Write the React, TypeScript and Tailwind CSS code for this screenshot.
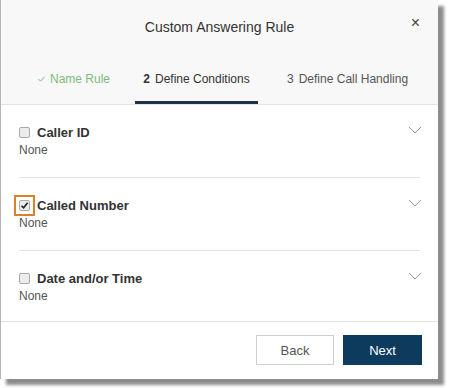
import React from 'react';

type Condition = {
    label: string;
    value: string;
    checked: boolean;
};

const conditions: Condition[] = [
    { label: 'Caller ID', value: 'None', checked: false },
    { label: 'Called Number', value: 'None', checked: true },
    { label: 'Date and/or Time', value: 'None', checked: false },
];

function Chevron() {
    return (
        <svg width="14" height="8" viewBox="0 0 14 8" className="shrink-0">
            <path d="M1 1 L7 7 L13 1" fill="none" stroke="#9a9a9a" strokeWidth="1" />
        </svg>
    );
}

function Box({ checked }: { checked: boolean }) {
    const box = (
        <span className="w-[11px] h-[11px] rounded-[2px] border border-[#a9a9a9] bg-[#ececec] flex items-center justify-center">
            {checked && (
                <svg width="9" height="9" viewBox="0 0 9 9">
                    <path d="M1.5 4.8 L3.6 6.8 L7.6 1.8" fill="none" stroke="#222" strokeWidth="1.6" />
                </svg>
            )}
        </span>
    );
    // the checked one is highlighted with an orange frame
    if (checked) {
        return (
            <span className="w-[21px] h-[21px] -ml-[5px] -mr-[5px] border-2 border-[#d9822b] flex items-center justify-center">
                {box}
            </span>
        );
    }
    return box;
}

export default function App() {
    return (
        <div className="w-[449px] h-[388px] bg-white" style={{ fontFamily: '"Liberation Sans", Arial, sans-serif' }}>
            <div className="w-[438px] h-[379px] bg-white border-l border-[#b5b5b5] shadow-[6px_6px_3px_rgba(0,0,0,0.45)] flex flex-col">
                {/* header */}
                <div className="relative h-[106px] bg-[#f8f8f8] border-b border-[#e3e3e3] flex flex-col">
                    <div className="pt-[18px] text-center text-[14px] leading-[18px] text-[#333]">Custom Answering Rule</div>
                    <button className="absolute right-[18px] top-[15px] text-[16px] leading-[16px] text-[#444]">×</button>
                    <div className="mt-auto flex items-start pl-[37px] text-[12px] leading-[16px]">
                        <div className="w-[97px] flex items-center text-[#7cbb7c]">
                            <svg width="7" height="6" viewBox="0 0 7 6" className="mr-[5px]">
                                <path d="M0.6 3.2 L2.6 5.2 L6.4 0.8" fill="none" stroke="#7cbb7c" strokeWidth="1" />
                            </svg>
                            Name Rule
                        </div>
                        <div className="w-[123px] text-center pb-[14px] border-b-[3px] border-[#1d3345] text-[#333]">
                            <span className="font-bold mr-[5px]">2</span>Define Conditions
                        </div>
                        <div className="pl-[29px] text-[#555]">
                            <span className="mr-[5px]">3</span>Define Call Handling
                        </div>
                    </div>
                </div>

                {/* conditions */}
                <div className="flex-1 flex flex-col">
                    {conditions.map((c, i) => (
                        <div
                            key={c.label}
                            className={`mx-[18px] pt-[19px] ${i < conditions.length - 1 ? 'pb-[19px] border-b border-[#e3e3e3]' : 'pb-[17px]'}`}
                        >
                            <div className="flex items-center h-[16px]">
                                <Box checked={c.checked} />
                                <span className="ml-[7px] text-[13px] font-bold text-[#333]">{c.label}</span>
                                <span className="ml-auto -mr-[2px] -mt-[4px]"><Chevron /></span>
                            </div>
                            <div className="mt-[2px] text-[12px] leading-[16px] text-[#555]">{c.value}</div>
                        </div>
                    ))}
                </div>

                {/* footer */}
                <div className="h-[58px] border-t border-[#e3e3e3] flex items-start justify-end gap-[9px] pr-[16px] pt-[13px]">
                    <button className="w-[78px] h-[30px] border border-[#cfcfcf] bg-white text-[13px] text-[#555]">Back</button>
                    <button className="w-[79px] h-[30px] bg-[#0d3b5e] text-[13px] text-white">Next</button>
                </div>
            </div>
        </div>
    );
}
